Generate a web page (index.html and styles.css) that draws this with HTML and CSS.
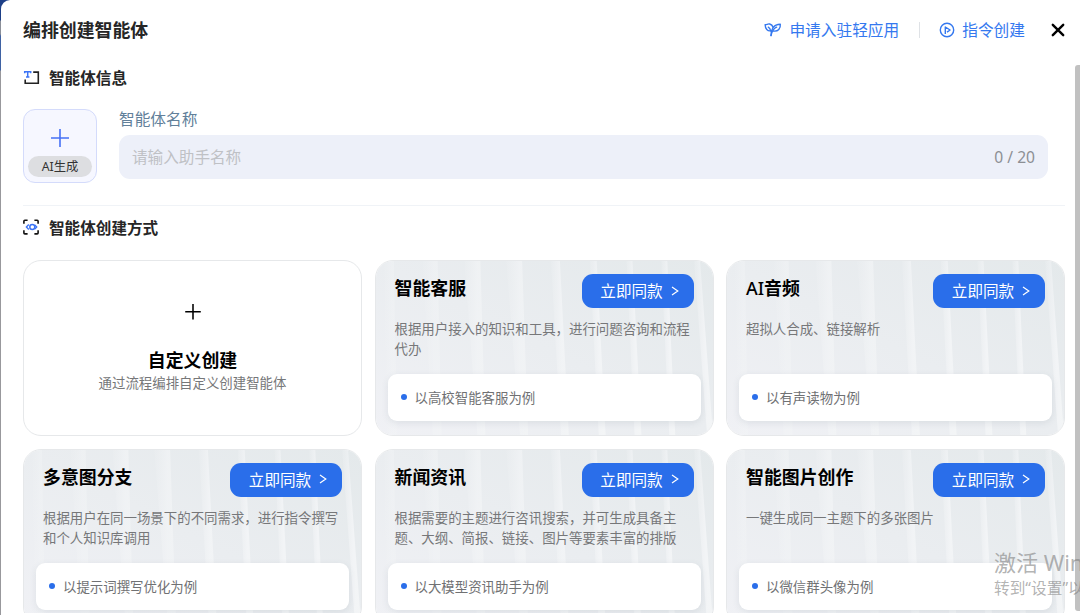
FILE: index.html
```
<!DOCTYPE html>
<html lang="zh-CN">
<head>
  <meta charset="UTF-8" />
  <meta name="viewport" content="width=device-width, initial-scale=1" />
  <title>编排创建智能体</title>
  <link rel="stylesheet" href="styles.css">
</head>
<body>

  <!-- Fondo rayado compartido por las tarjetas -->
  <svg class="defs" width="0" height="0">
    <defs>
      <linearGradient id="base" x1="0" y1="1" x2="1" y2="0">
        <stop offset="0" stop-color="#f0f1f5" />
        <stop offset="0.5" stop-color="#eaedf0" />
        <stop offset="1" stop-color="#e4e9eb" />
      </linearGradient>
      <linearGradient id="fade" x1="0" y1="0" x2="1" y2="0">
        <stop offset="0" stop-color="#f0f2f4" stop-opacity="0.2" />
        <stop offset="0.6" stop-color="#f2f4f6" />
        <stop offset="1" stop-color="#f3f5f6" />
      </linearGradient>
      <symbol id="stripes" viewBox="0 0 339 176" preserveAspectRatio="none">
        <rect width="339" height="176" fill="url(#base)" />
        <g fill="url(#fade)">
          <path d="M8 0h10l3 176h-10z" opacity=".4" />
          <path d="M47 0h15l4 176h-9z" opacity=".5" />
          <path d="M89 0h16l5 176h-8z" opacity=".7" />
          <path d="M131 0h16l6 176h-8z" opacity=".7" />
          <path d="M176 0h9l9 176h-8z" opacity=".9" />
          <path d="M215 0h7l9 176h-7z" />
          <path d="M252 0h6l9 176h-7z" />
          <path d="M287 0h6l8 176h-6z" />
          <path d="M320 0h6l13 176h-6z" />
        </g>
      </symbol>
    </defs>
  </svg>

  <div class="modal">
    <header class="header">
      <h1>编排创建智能体</h1>
      <nav class="actions">
        <a class="action apply">
          <svg width="18" height="16" viewBox="0 0 18 16" fill="none" stroke="#3478ef" stroke-width="1.4" stroke-linecap="round" stroke-linejoin="round">
            <path d="M7 13.6C6.8 7.5 9.6 2.2 16.3 2.2C16.8 6.2 14.2 10 9.2 9" />
            <path d="M12.6 5.2C9.8 6.4 7.8 9.8 7 13.6" />
            <path d="M6.6 8.8C3.6 9.2 1.2 6.8 1.1 2.6C2.7 3 3.7 1.5 5.7 2C7.4 2.5 8.5 3.6 8.9 5" />
            <path d="M4.3 5.2C5.7 6 6.4 7.4 6.6 8.8" />
          </svg>
          申请入驻轻应用
        </a>
        <span class="sep"></span>
        <a class="action command">
          <svg width="16" height="16" viewBox="0 0 16 16" fill="none" stroke="#3478ef" stroke-width="1.4" stroke-linejoin="round">
            <circle cx="8" cy="8" r="6.7" />
            <path d="M6.3 11.9V5l4.8 3-3.1 2.1" />
          </svg>
          指令创建
        </a>
        <svg class="close" width="14" height="14" viewBox="0 0 14 14" stroke="#000" stroke-width="2.4" stroke-linecap="round">
          <path d="M1.8 1.8l10.4 10.4M12.2 1.8L1.8 12.2" />
        </svg>
      </nav>
    </header>

    <main class="content">
      <h2 class="section-title">
        <svg width="17" height="17" viewBox="0 0 17 17" fill="none">
          <path d="M2.2 10.5V14.3H15.3V3.1H10.2" stroke="#222" stroke-width="1.6" />
          <path d="M1.7 4.2V2.7H7.7V4.2M4.7 2.7V8M3 8H6.4" stroke="#3c74f5" stroke-width="1.5" />
        </svg>
        <span>智能体信息</span>
      </h2>

      <div class="info">
        <div class="avatar">
          <svg width="18" height="18" viewBox="0 0 18 18" stroke="#4671f6" stroke-width="1.6">
            <path d="M9 0v18M0 9h18" />
          </svg>
          <span class="ai-tag">AI生成</span>
        </div>
        <div class="field">
          <label>智能体名称</label>
          <div class="input">
            <span class="placeholder">请输入助手名称</span>
            <span class="count">0 / 20</span>
          </div>
        </div>
      </div>

      <h2 class="section-title ways">
        <svg width="17" height="17" viewBox="0 0 17 17" fill="none">
          <path d="M.9 4.8V2.2Q.9 1.2 1.9 1.2H4.6M11.4 1.2H14.1Q15.1 1.2 15.1 2.2V4.8M15.1 11.3V13.9Q15.1 14.9 14.1 14.9H11.4M4.6 14.9H1.9Q.9 14.9.9 13.9V11.3" stroke="#111" stroke-width="1.6" />
          <path d="M5.8 5.5L3.4 8L5.8 10.5M11.8 5.9L13.7 8L11.8 10.1" stroke="#3c74f5" stroke-width="1.4" />
          <circle cx="9.3" cy="8" r="2.5" stroke="#3c74f5" stroke-width="1.5" />
        </svg>
        <span>智能体创建方式</span>
      </h2>

      <div class="card-container">
        <div class="card custom">
          <svg width="18" height="18" viewBox="0 0 18 18" stroke="#000" stroke-width="1.8">
            <path d="M9 0v18M0 9h18" />
          </svg>
          <h3>自定义创建</h3>
          <p>通过流程编排自定义创建智能体</p>
        </div>

        <div class="card">
          <svg class="card-bg"><use href="#stripes" /></svg>
          <div class="card-head">
            <h3>智能客服</h3>
            <button class="btn">立即同款 <svg width="8" height="10" viewBox="0 0 8 10"><path d="M1 1l5.8 4L1 9" /></svg></button>
          </div>
          <p>根据用户接入的知识和工具，进行问题咨询和流程代办</p>
          <div class="sample">以高校智能客服为例</div>
        </div>

        <div class="card">
          <svg class="card-bg"><use href="#stripes" /></svg>
          <div class="card-head">
            <h3><span class="latin">AI</span>音频</h3>
            <button class="btn">立即同款 <svg width="8" height="10" viewBox="0 0 8 10"><path d="M1 1l5.8 4L1 9" /></svg></button>
          </div>
          <p>超拟人合成、链接解析</p>
          <div class="sample">以有声读物为例</div>
        </div>

        <div class="card">
          <svg class="card-bg"><use href="#stripes" /></svg>
          <div class="card-head">
            <h3>多意图分支</h3>
            <button class="btn">立即同款 <svg width="8" height="10" viewBox="0 0 8 10"><path d="M1 1l5.8 4L1 9" /></svg></button>
          </div>
          <p>根据用户在同一场景下的不同需求，进行指令撰写和个人知识库调用</p>
          <div class="sample">以提示词撰写优化为例</div>
        </div>

        <div class="card">
          <svg class="card-bg"><use href="#stripes" /></svg>
          <div class="card-head">
            <h3>新闻资讯</h3>
            <button class="btn">立即同款 <svg width="8" height="10" viewBox="0 0 8 10"><path d="M1 1l5.8 4L1 9" /></svg></button>
          </div>
          <p>根据需要的主题进行咨讯搜索，并可生成具备主题、大纲、简报、链接、图片等要素丰富的排版</p>
          <div class="sample">以大模型资讯助手为例</div>
        </div>

        <div class="card">
          <svg class="card-bg"><use href="#stripes" /></svg>
          <div class="card-head">
            <h3>智能图片创作</h3>
            <button class="btn">立即同款 <svg width="8" height="10" viewBox="0 0 8 10"><path d="M1 1l5.8 4L1 9" /></svg></button>
          </div>
          <p>一键生成同一主题下的多张图片</p>
          <div class="sample">以微信群头像为例</div>
        </div>
      </div>
    </main>
  </div>

  <div class="scrollbar"></div>

  <div class="watermark">
    <div class="wm-title">激活 Win</div>
    <div class="wm-text">转到“设置”以</div>
  </div>

</body>
</html>
```

FILE: styles.css
```
* {
  margin: 0;
  padding: 0;
  box-sizing: border-box;
}

body {
  position: relative;
  height: 615px;
  overflow: hidden;
  font-family: "Noto Sans", "Noto Sans CJK SC", sans-serif;
  background: linear-gradient(#1d3f87 0, #1d3f87 20px, #8b8f98 21px, #8b8f98 34px, #3f62a3 36px, #3f62a3 70px, #98989c 71px);
}

.defs {
  position: absolute;
}

.modal {
  height: 615px;
  margin-left: 1px;
  padding-bottom: 2px;
  display: flex;
  flex-direction: column;
  background: #fff;
  border-top-left-radius: 9px;
}

.header {
  height: 60px;
  flex: none;
  display: flex;
  align-items: center;
  justify-content: space-between;
  padding: 0 15px 0 22px;
}

.header h1 {
  font-size: 17.9px;
  line-height: 24px;
  color: #262626;
}

.actions {
  display: flex;
  align-items: center;
}

.action {
  display: flex;
  align-items: center;
  font-size: 15.7px;
  line-height: 22px;
  color: #3478ef;
}

.apply svg {
  margin-right: 7px;
}

.command svg {
  margin-right: 7px;
}

.sep {
  width: 1px;
  height: 16px;
  margin: 0 19px 0 20px;
  background: #dfe2e6;
}

.close {
  margin-left: 26px;
}

.content {
  flex: 1;
  min-height: 0;
  overflow: hidden;
  padding: 5px 15px 0 22px;
}

.section-title {
  display: flex;
  align-items: center;
  gap: 9px;
  height: 24px;
  font-size: 15.6px;
  color: #262626;
}

.info {
  display: flex;
  gap: 22px;
  height: 117px;
  padding: 20px 17px 0 0;
  border-bottom: 1px solid #f0f3f7;
}

.avatar {
  width: 74px;
  height: 74px;
  display: flex;
  flex-direction: column;
  align-items: center;
  justify-content: space-between;
  padding: 19px 0 5px;
  border: 1px solid #d4dbfb;
  border-radius: 12px;
  background: #f6f7ff;
}

.ai-tag {
  width: 64px;
  height: 21px;
  line-height: 21px;
  border-radius: 11px;
  background: #dddee1;
  color: #333;
  font-size: 12.3px;
  text-align: center;
}

.field {
  flex: 1;
}

.field label {
  display: block;
  height: 26px;
  line-height: 21px;
  font-size: 15.7px;
  color: #62809a;
}

.input {
  display: flex;
  align-items: center;
  justify-content: space-between;
  height: 44px;
  padding: 0 13px 1px;
  border-radius: 11px;
  background: #edf0f9;
  font-size: 15.6px;
}

.placeholder {
  color: #bfc1c5;
}

.count {
  font-size: 15.6px;
  color: #8c8f94;
}

.ways {
  margin-top: 9px;
}

.card-container {
  display: grid;
  grid-template-columns: repeat(3, 1fr);
  grid-auto-rows: 176px;
  gap: 12.5px;
  margin-top: 21px;
}

.card {
  position: relative;
  z-index: 0;
  overflow: hidden;
  padding: 14px 12px;
  border: 1.5px solid #e6e8ea;
  border-radius: 18px;
}

/* la textura va detrás del texto */
.card-bg {
  position: absolute;
  inset: 0;
  z-index: -1;
  width: 100%;
  height: 100%;
}

.card h3 {
  font-size: 17.9px;
  line-height: 29px;
  color: #000;
}

.latin {
  font-weight: 500;
}

.card p {
  height: 56px;
  margin: 9px 7px 0;
  padding-top: 2px;
  font-size: 13.43px;
  line-height: 20px;
  color: #767779;
}

.card-head {
  display: flex;
  justify-content: space-between;
  height: 34px;
  margin: -1px 7px 0;
}

.btn {
  display: flex;
  align-items: center;
  justify-content: center;
  gap: 8px;
  width: 112px;
  height: 34px;
  padding: 0 0 1px 4px;
  border: none;
  border-radius: 11px;
  background: #2a6eea;
  color: #fff;
  font-family: inherit;
  font-size: 15.6px;
}

.btn svg {
  fill: none;
  stroke: #fff;
  stroke-width: 1.2;
}

.sample {
  display: flex;
  align-items: center;
  gap: 8px;
  height: 47px;
  margin-top: 1px;
  padding: 0 0 1px 13px;
  border-radius: 9px;
  background: #fff;
  box-shadow: 0 2px 7px rgba(60, 75, 95, 0.1);
  color: #707173;
  font-size: 13.43px;
}

.sample::before {
  content: '';
  width: 6px;
  height: 6px;
  border-radius: 50%;
  background: #2a6eea;
}

.custom {
  display: flex;
  flex-direction: column;
  align-items: center;
  padding-top: 43px;
  background: #fff;
}

.custom h3 {
  margin-top: 26px;
}

.custom p {
  margin-top: -2px;
  padding: 0;
}

.scrollbar {
  position: absolute;
  top: 65px;
  right: 0;
  width: 5px;
  height: 546px;
  border-radius: 3px 0 0 3px;
  background: #c1c1c1;
}

.watermark {
  position: absolute;
  top: 547px;
  left: 994px;
  right: 0;
  overflow: hidden;
  white-space: nowrap;
  color: rgba(130, 130, 130, 0.62);
}

.wm-title {
  font-size: 22px;
  line-height: 30px;
}

.wm-text {
  font-size: 15.7px;
  line-height: 22px;
}
```
